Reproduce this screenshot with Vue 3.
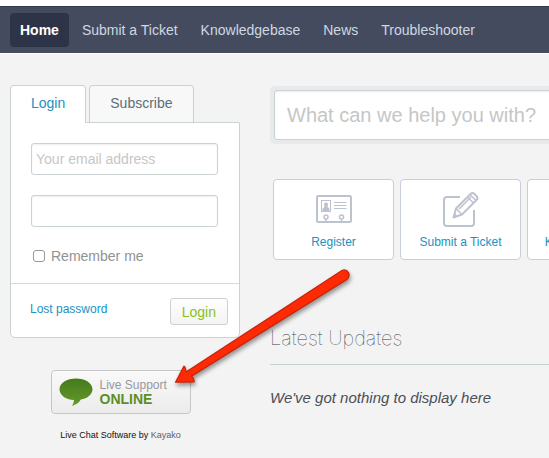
<script setup>
import { ref } from 'vue'

const navItems = ['Home', 'Submit a Ticket', 'Knowledgebase', 'News', 'Troubleshooter']
const email = ref('')
const password = ref('')
const remember = ref(false)
const query = ref('')
</script>

<template>
  <div class="page">
    <nav class="nav">
      <a v-for="(item, i) in navItems" :key="item" href="#" class="nav-item" :class="{ active: i === 0 }">{{ item }}</a>
    </nav>

    <div class="columns">
      <aside class="side">
        <div class="tabs">
          <button type="button" class="tab selected">Login</button>
          <button type="button" class="tab">Subscribe</button>
        </div>
        <form class="login" @submit.prevent>
          <div class="fields">
            <input v-model="email" class="field" type="text" placeholder="Your email address" aria-label="Your email address" />
            <input v-model="password" class="field" type="password" aria-label="Password" />
            <label class="remember"><input v-model="remember" type="checkbox" class="check" />Remember me</label>
          </div>
          <div class="actions">
            <a href="#" class="lost">Lost password</a>
            <button type="submit" class="submit">Login</button>
          </div>
        </form>

        <div class="chat">
          <a href="#" class="live">
            <svg class="bubble" width="34" height="30" viewBox="0 0 34 30" aria-hidden="true">
              <defs>
                <linearGradient id="leaf" x1="0" y1="0" x2="0" y2="1">
                  <stop offset="0" stop-color="#457a1c" />
                  <stop offset="1" stop-color="#659a2b" />
                </linearGradient>
              </defs>
              <path d="M17 1.500C7.800 1.500 .5 6.200 .5 12.200c0 5.800 6 10.300 14.500 10.800-.2 2.300-1 4.200-2.200 6 4.200-1.200 7.300-3.300 9-6.400 6.800-1.300 11.700-5.300 11.700-10.400C33.500 6.200 26.200 1.500 17 1.500z" fill="url(#leaf)" />
            </svg>
            <span class="live-text">
              <span class="live-top">Live Support</span>
              <strong class="live-state">ONLINE</strong>
            </span>
          </a>
          <p class="credit">Live Chat Software by <a href="#">Kayako</a></p>
        </div>
      </aside>

      <main class="main">
        <div class="search">
          <input v-model="query" class="search-input" type="text" placeholder="What can we help you with?" aria-label="Search" />
        </div>

        <div class="cards">
          <a href="#" class="card">
            <svg width="36" height="36" viewBox="0 0 36 36" fill="none" stroke="#bcc2ce" aria-hidden="true">
              <rect x="1" y="5" width="34" height="26" rx="1.500" stroke-width="2" />
              <rect x="5.500" y="9.500" width="9" height="11" />
              <path d="M6.500 20v-2.500l2-1.500q-1.500-4.500 1.500-4.500t1.500 4.500l2 1.500v2.500z" fill="#bcc2ce" stroke="none" />
              <path d="M18 11.500h12.500M18 14.500h12.500M18 17.500h12.500" />
              <circle cx="10" cy="26" r="2" stroke-width="1.500" />
              <circle cx="25.500" cy="26" r="2" stroke-width="1.500" />
              <path d="M10 28v3M25.500 28v3" stroke-width="1.500" />
            </svg>
            <span>Register</span>
          </a>
          <a href="#" class="card">
            <svg width="36" height="36" viewBox="0 0 36 36" fill="none" stroke="#bcc2ce" stroke-width="2" aria-hidden="true">
              <path d="M17 6H4Q1 6 1 9v23q0 3 3 3h24q3 0 3-3V19" />
              <path d="M10.500 26.500l2.500-9L27.500 3q2-2 4 0l2 2q2 2 0 4L19 23.500z" stroke-linejoin="round" />
              <path d="M13 17.500l6 6M16 18L28 6M24.500 6l6 6M27 3.500l6 6" stroke-width="1.500" />
              <path d="M10 27l1.500-5 3.500 3.500z" fill="#bcc2ce" stroke="none" />
            </svg>
            <span>Submit a Ticket</span>
          </a>
          <a href="#" class="card">
            <svg width="36" height="36" viewBox="0 0 36 36" fill="none" stroke="#bcc2ce" stroke-width="2" aria-hidden="true">
              <path d="M18 8Q10 3 2 6v24q8-3 16 2 8-5 16-2V6q-8-3-16 2v24" />
            </svg>
            <span>Knowledgebase</span>
          </a>
        </div>

        <section class="updates">
          <h2>Latest Updates</h2>
          <p>We've got nothing to display here</p>
        </section>
      </main>
    </div>

    <svg class="arrow" width="190" height="130" viewBox="168 262 190 130" aria-hidden="true">
      <path d="M175.500 382.200L184 366Q185.500 366 186 372L341.500 270.800Q346 268.500 348.500 272.500 350.500 277 346.500 279.700L191.500 376.200Q195 379 194 382z" fill="#fe2a04" stroke="#c5230c" stroke-width="1.200" stroke-linejoin="round" />
    </svg>
  </div>
</template>

<style>
body {
  margin: 0;
  background: #f3f3f3;
}
</style>

<style scoped>
* {
  box-sizing: border-box;
}

.page {
  position: relative;
  overflow: hidden;
  min-height: 100vh;
  border-top: 6px solid #fff;
  background: #f3f3f3;
  font-family: "Liberation Sans", Arial, sans-serif;
  font-size: 14px;
  line-height: 18px;
}

a {
  text-decoration: none;
}

input,
button {
  margin: 0;
  font-family: inherit;
}

.nav {
  display: flex;
  gap: 3px;
  padding: 6px 10px;
  border-top: 1px solid #333b48;
  border-bottom: 1px solid #fff;
  background: #444b5e;
}

.nav-item {
  padding: 8px 10px;
  border-radius: 4px;
  color: #cfd8e3;
  white-space: nowrap;
}

.nav-item.active {
  background: #2e3447;
  color: #fff;
  font-weight: bold;
}

.columns {
  display: flex;
  gap: 30px;
  padding: 31px 0 0 10px;
}

.side {
  flex: none;
  width: 230px;
}

.tabs {
  display: flex;
  gap: 3px;
}

.tab {
  height: 37px;
  padding: 0 20px 2px;
  border: 1px solid #cbd2d3;
  border-bottom: 0;
  border-radius: 4px 4px 0 0;
  background: #f8f8f8;
  color: #587078;
  font-size: 14px;
}

.tab.selected {
  position: relative;
  height: 38px;
  margin-bottom: -1px;
  padding-bottom: 3px;
  background: #fff;
  color: #2191c0;
}

.login {
  border: 1px solid #cbd2d6;
  border-radius: 0 0 5px 5px;
  background: #fff;
}

.fields {
  display: flex;
  flex-direction: column;
  gap: 20px;
  padding: 20px 21px 18px 20px;
}

.field {
  width: 100%;
  height: 32px;
  padding: 0 4px;
  border: 1px solid #cbd2d3;
  border-radius: 3px;
  background: #fff;
  box-shadow: inset 0 1px 2px #eee;
  font-size: 14px;
}

.field::placeholder,
.search-input::placeholder {
  color: #c6c6c6;
  opacity: 1;
}

.remember {
  display: flex;
  align-items: center;
  gap: 6px;
  color: #8f9296;
}

.check {
  appearance: none;
  width: 12px;
  height: 12px;
  margin-left: 2px;
  border: 1px solid #999;
  border-radius: 3px;
  background: #fff;
}

.check:checked {
  background: #2191c0;
}

.actions {
  display: flex;
  justify-content: space-between;
  padding: 14px 11px 12px 19px;
  border-top: 1px solid #d3dade;
}

.lost {
  padding-top: 2px;
  color: #2191c0;
  font-size: 12px;
}

.submit {
  height: 27px;
  padding: 0 11px;
  border: 1px solid #ccd2d4;
  border-radius: 3px;
  background: linear-gradient(#fff, #f3f3f3);
  color: #8ac21b;
  font-size: 14px;
}

.chat {
  display: flex;
  flex-direction: column;
  align-items: center;
  gap: 14px;
  padding: 32px 9px 0 0;
}

.live {
  display: flex;
  align-items: center;
  gap: 7px;
  width: 140px;
  height: 44px;
  padding: 0 7px;
  border: 1px solid #c6c6c6;
  border-radius: 4px;
  background: linear-gradient(#f9f9f9, #ececec);
}

.live-text {
  display: flex;
  flex-direction: column;
  line-height: 14px;
  white-space: nowrap;
}

.live-top {
  color: #98999c;
  font-size: 12px;
}

.live-state {
  color: #5c8e27;
  font-size: 14px;
}

.credit {
  margin: 0;
  color: #111;
  font-size: 9px;
  line-height: 14px;
}

.credit a {
  color: #5e616b;
}

.main {
  flex: 1 0 390px;
  padding-top: 1px;
}

.search {
  padding: 4px;
  border-radius: 5px;
  background: #e7e9ea;
}

.search-input {
  display: block;
  width: 100%;
  height: 50px;
  padding: 0 12px;
  border: 1px solid #cbd2d3;
  border-radius: 3px;
  background: #fff;
  box-shadow: inset 0 1px 2px #eee;
  font-size: 20px;
}

.cards {
  display: flex;
  gap: 6px;
  padding: 35px 0 0 3px;
}

.card {
  display: flex;
  flex: none;
  flex-direction: column;
  align-items: center;
  gap: 8px;
  width: 121px;
  height: 81px;
  padding-top: 11px;
  border: 1px solid #c8ced9;
  border-radius: 4px;
  background: #fff;
  color: #2191c0;
  font-size: 12px;
  line-height: 14px;
}

.updates h2 {
  margin: 66px 0 0;
  padding-bottom: 14px;
  border-bottom: 1px solid #c6cfd1;
  color: #3a3d46;
  font-family: Inter, Roboto, sans-serif;
  font-size: 20px;
  font-weight: 100;
  line-height: 24px;
}

.updates p {
  margin: 24px 0 0;
  color: #4a4e55;
  font-size: 15px;
  font-style: italic;
}

.arrow {
  position: absolute;
  top: 256px;
  left: 168px;
  filter: drop-shadow(1px 3px 2px rgba(0, 0, 0, 0.4));
  pointer-events: none;
}
</style>
